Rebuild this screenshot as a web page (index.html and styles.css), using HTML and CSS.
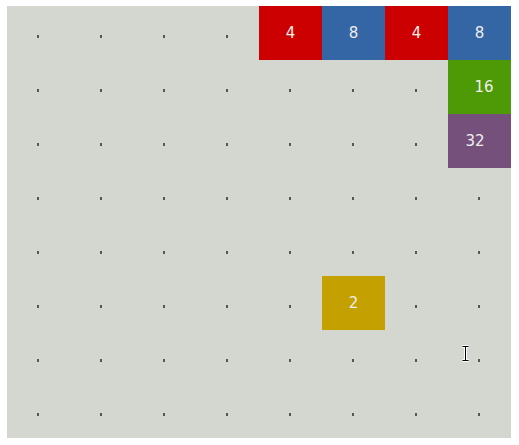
FILE: index.html
```html
<!DOCTYPE html>
<html>
<head>
<meta charset="utf-8">
<link rel="stylesheet" href="styles.css">
</head>
<body>
<div class="board">
  <div class="cell"><i class="dot"></i></div><div class="cell"><i class="dot"></i></div><div class="cell"><i class="dot"></i></div><div class="cell"><i class="dot"></i></div>
  <div class="cell tile t4"><span>4</span></div><div class="cell tile t8"><span>8</span></div><div class="cell tile t4"><span>4</span></div><div class="cell tile t8"><span>8</span></div>

  <div class="cell"><i class="dot"></i></div><div class="cell"><i class="dot"></i></div><div class="cell"><i class="dot"></i></div><div class="cell"><i class="dot"></i></div>
  <div class="cell"><i class="dot"></i></div><div class="cell"><i class="dot"></i></div><div class="cell"><i class="dot"></i></div><div class="cell tile t16"><span class="nudge-r">16</span></div>

  <div class="cell"><i class="dot"></i></div><div class="cell"><i class="dot"></i></div><div class="cell"><i class="dot"></i></div><div class="cell"><i class="dot"></i></div>
  <div class="cell"><i class="dot"></i></div><div class="cell"><i class="dot"></i></div><div class="cell"><i class="dot"></i></div><div class="cell tile t32"><span class="nudge-l">32</span></div>

  <div class="cell"><i class="dot"></i></div><div class="cell"><i class="dot"></i></div><div class="cell"><i class="dot"></i></div><div class="cell"><i class="dot"></i></div>
  <div class="cell"><i class="dot"></i></div><div class="cell"><i class="dot"></i></div><div class="cell"><i class="dot"></i></div><div class="cell"><i class="dot"></i></div>

  <div class="cell"><i class="dot"></i></div><div class="cell"><i class="dot"></i></div><div class="cell"><i class="dot"></i></div><div class="cell"><i class="dot"></i></div>
  <div class="cell"><i class="dot"></i></div><div class="cell"><i class="dot"></i></div><div class="cell"><i class="dot"></i></div><div class="cell"><i class="dot"></i></div>

  <div class="cell"><i class="dot"></i></div><div class="cell"><i class="dot"></i></div><div class="cell"><i class="dot"></i></div><div class="cell"><i class="dot"></i></div>
  <div class="cell"><i class="dot"></i></div><div class="cell tile t2"><span>2</span></div><div class="cell"><i class="dot"></i></div><div class="cell"><i class="dot"></i></div>

  <div class="cell"><i class="dot"></i></div><div class="cell"><i class="dot"></i></div><div class="cell"><i class="dot"></i></div><div class="cell"><i class="dot"></i></div>
  <div class="cell"><i class="dot"></i></div><div class="cell"><i class="dot"></i></div><div class="cell"><i class="dot"></i></div><div class="cell"><i class="dot"></i></div>

  <div class="cell"><i class="dot"></i></div><div class="cell"><i class="dot"></i></div><div class="cell"><i class="dot"></i></div><div class="cell"><i class="dot"></i></div>
  <div class="cell"><i class="dot"></i></div><div class="cell"><i class="dot"></i></div><div class="cell"><i class="dot"></i></div><div class="cell"><i class="dot"></i></div>

  <svg class="cursor" width="9" height="17" viewBox="0 0 9 17">
    <path d="M1.5 1.5h6M4.5 1.5v14M1.5 15.5h6" stroke="#fff" stroke-width="3" fill="none"/>
    <path d="M1.5 1.5h6M4.5 1.5v14M1.5 15.5h6" stroke="#000" stroke-width="1" fill="none"/>
  </svg>
</div>
</body>
</html>
```

FILE: styles.css
```css
html, body {
  margin: 0;
  padding: 0;
  background: #ffffff;
}
body {
  font-family: "DejaVu Sans", sans-serif;
}
.board {
  position: relative;
  margin: 6px 0 0 7px;
  width: 504px;
  height: 432px;
  background: #d3d7cf;
  display: grid;
  grid-template-columns: repeat(8, 63px);
  grid-template-rows: repeat(8, 54px);
}
.cell {
  display: flex;
  align-items: center;
  justify-content: center;
}
.dot {
  display: block;
  width: 2px;
  height: 3px;
  background: #555753;
  margin-top: 7px;
  margin-left: -1px;
}
.tile {
  color: #eeeeec;
  font-size: 15px;
  line-height: 1;
}
.t2 { background: #c4a000; }
.t4 { background: #cc0000; }
.t8 { background: #3465a4; }
.t16 { background: #4e9a06; }
.t32 { background: #75507b; }
.nudge-r { margin-left: 9px; }
.nudge-l { margin-right: 9px; }
.cursor {
  position: absolute;
  left: 454px;
  top: 339px;
}
```
